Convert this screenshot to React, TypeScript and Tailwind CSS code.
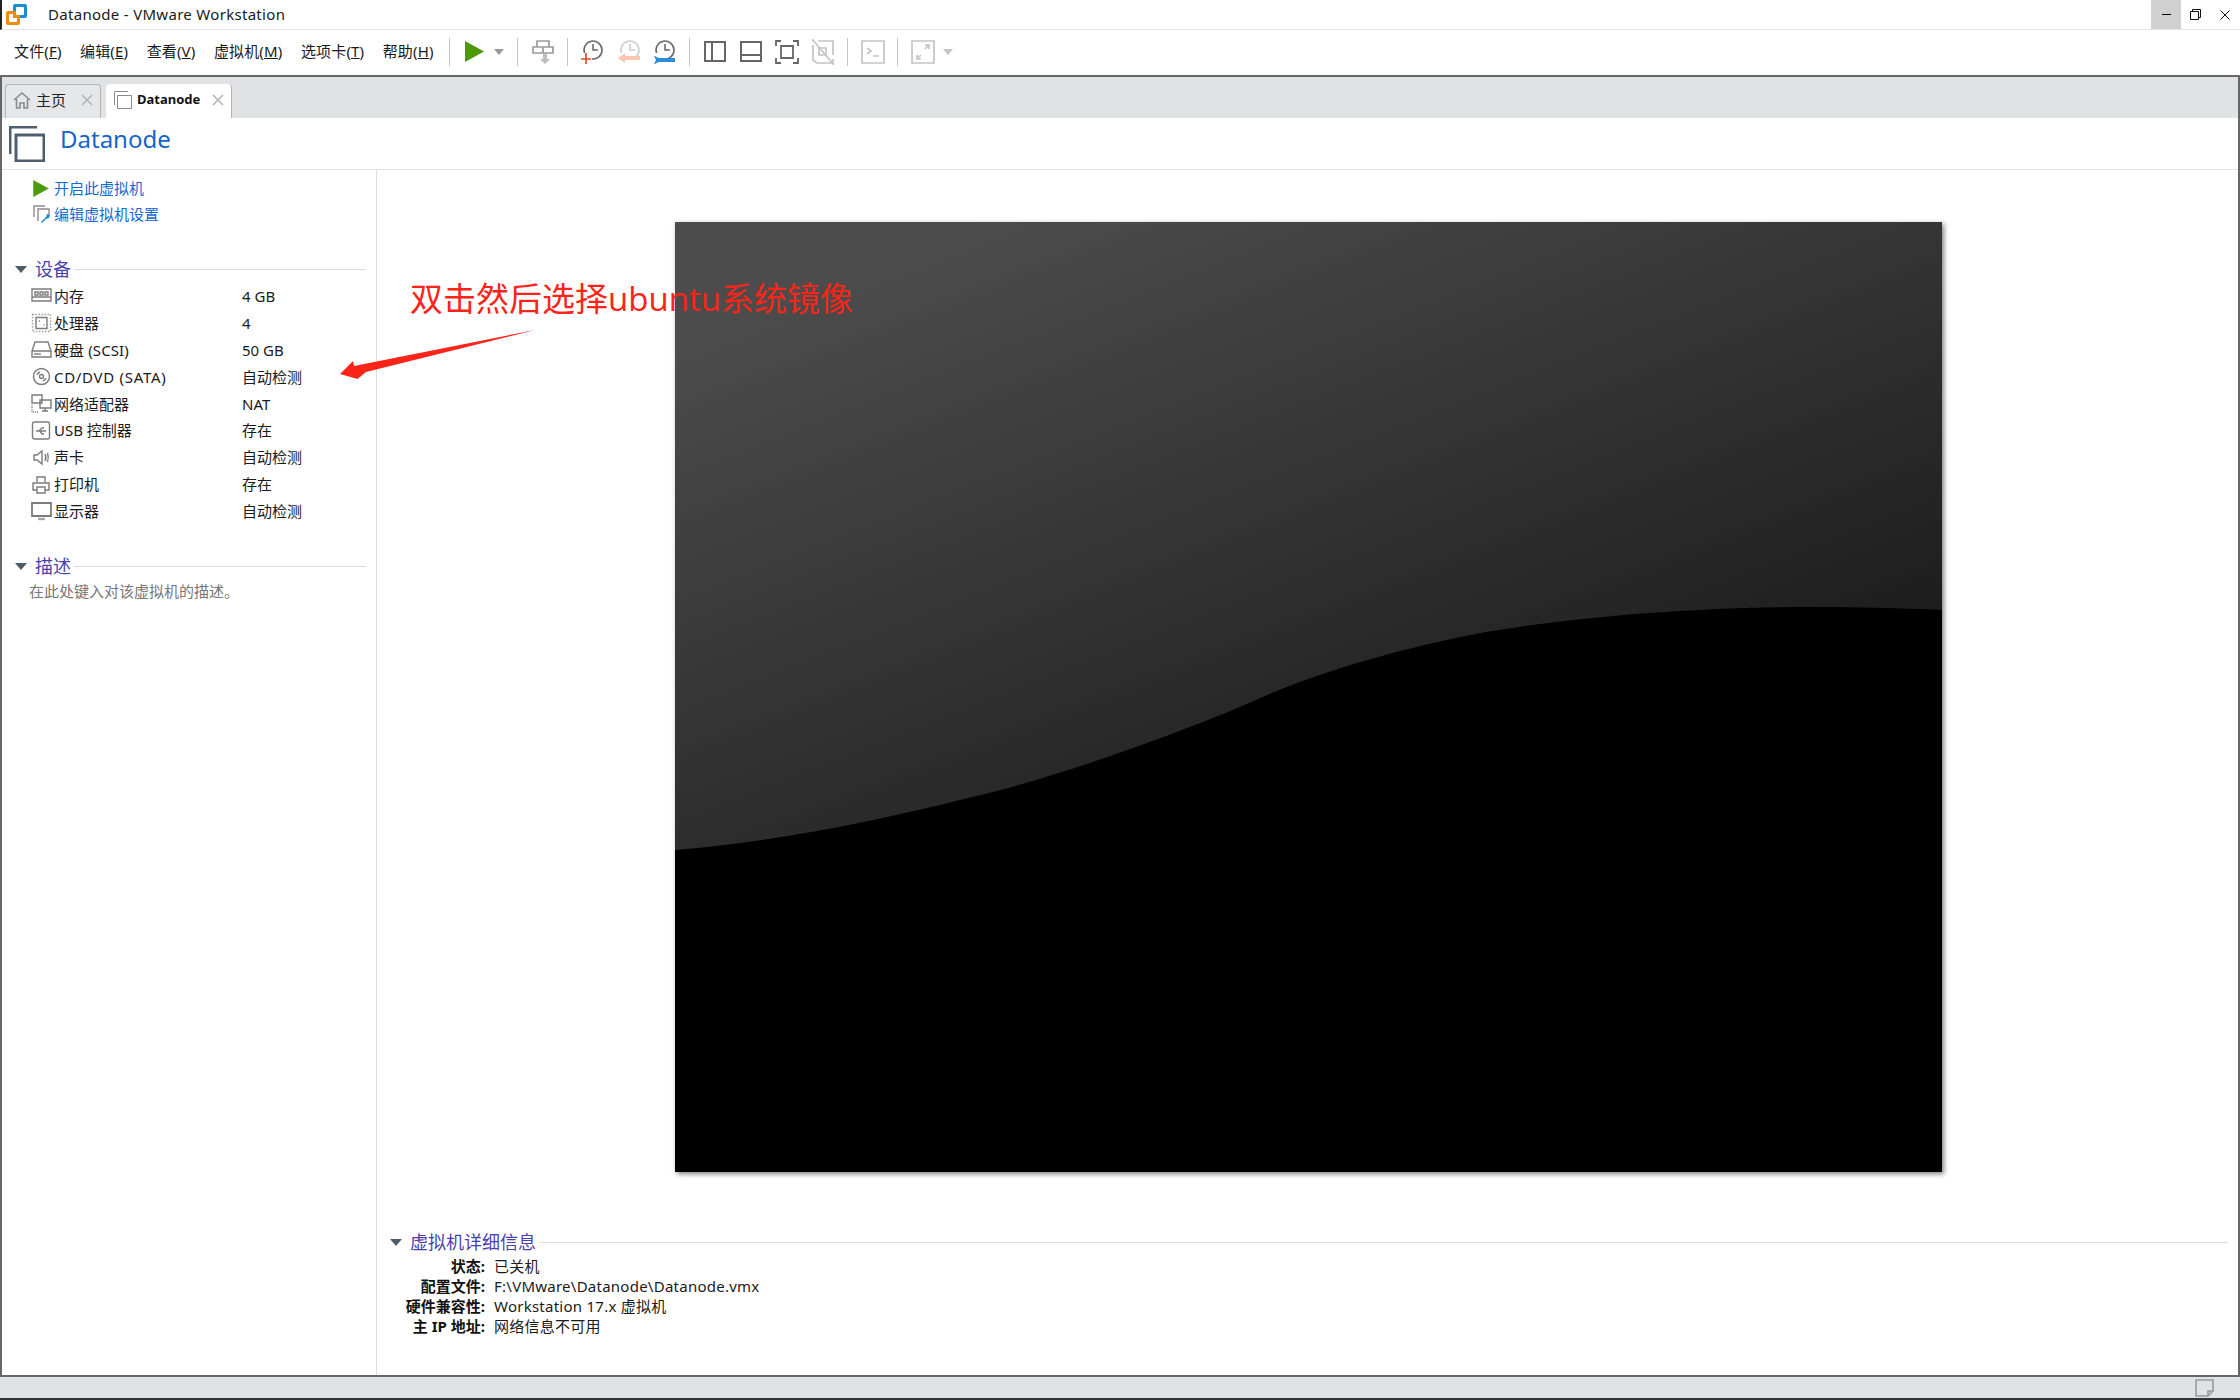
import React from "react";

const FONT = "font-['Noto_Sans','Noto_Sans_CJK_SC',sans-serif]";

const Sep = ({ className = "" }: { className?: string }) => (
  <div className={`w-px h-[28px] bg-[#c8c8c8] shrink-0 ${className}`} />
);

const Caret = ({ className = "", color = "#9a9a9a" }: { className?: string; color?: string }) => (
  <svg width="10" height="6" viewBox="0 0 10 6" className={`shrink-0 ${className}`}>
    <path d="M0 0h10L5 6z" fill={color} />
  </svg>
);

const SectionCaret = ({ className = "" }: { className?: string }) => (
  <svg width="12" height="7" viewBox="0 0 12 7" className={`shrink-0 ${className}`}>
    <path d="M0 0h12L6 7z" fill="#4f5b66" />
  </svg>
);

const Play = ({ w, h }: { w: number; h: number }) => (
  <svg width={w} height={h} viewBox="0 0 20 22" className="shrink-0">
    <path d="M0 0l20 11L0 22z" fill="#4c9a0a" />
  </svg>
);

const VmIcon = ({ size, stroke, color }: { size: number; stroke: number; color: string }) => (
  <svg width={size} height={size} viewBox="0 0 36 36" fill="none" stroke={color} strokeWidth={stroke} className="shrink-0">
    <path d="M28 1H1v27" />
    <path d="M7 9h28v26H7z" />
  </svg>
);

const X = ({ color = "#b5b5b5" }: { color?: string }) => (
  <svg width="12" height="12" viewBox="0 0 12 12" stroke={color} strokeWidth="1.6" className="shrink-0">
    <path d="M1 1l10 10M11 1L1 11" />
  </svg>
);

const Clock = ({ color }: { color: string }) => (
  <g fill="none" stroke={color} strokeWidth="1.6">
    <path d="M3.5 14A9 9 0 1 1 11 20" />
    <path d="M12 5v6h5" />
  </g>
);

const Tool = ({ w, className = "", children }: { w: number; className?: string; children: React.ReactNode }) => (
  <svg width={w} height="26" viewBox={`0 0 ${w} 26`} className={`shrink-0 ${className}`}>
    {children}
  </svg>
);

const Toolbar = () => (
  <div className="h-[45px] pb-[2px] flex items-center shrink-0 bg-white">
    <div className="w-[449px] pl-[14px] pb-[1px] flex gap-[18.5px] text-[15px] tracking-[0.15px] text-[#1a1a1a] shrink-0 whitespace-nowrap">
      <span>文件(<u>F</u>)</span>
      <span>编辑(<u>E</u>)</span>
      <span>查看(<u>V</u>)</span>
      <span>虚拟机(<u>M</u>)</span>
      <span>选项卡(<u>T</u>)</span>
      <span>帮助(<u>H</u>)</span>
    </div>
    <Sep />
    <div className="ml-[15px]"><Play w={19} h={21} /></div>
    <Caret className="ml-[10px]" />
    <Sep className="ml-[13px]" />
    <Tool w={22} className="ml-[14px]">
      <g fill="none" stroke="#9a9a9a" strokeWidth="1.7">
        <path d="M5 2h12v6H5zM1 8h10v6H1zM11 8h10v6H11z" />
      </g>
      <path d="M14 15v5h-3l5 5 5-5h-3v-5z" fill="#bdbdbd" transform="translate(-3 0)" />
    </Tool>
    <Sep className="ml-[13px]" />
    <Tool w={22} className="ml-[13px]">
      <Clock color="#6a6a6a" />
      <path d="M5 14v11M0 20h10" stroke="#e0531f" strokeWidth="1.7" />
    </Tool>
    <Tool w={22} className="ml-[15px] opacity-60">
      <Clock color="#b0b0b0" />
      <path d="M22 19H6" stroke="#ffa27c" strokeWidth="4" />
      <path d="M0 19l7-5v10z" fill="#ffa27c" />
    </Tool>
    <Tool w={22} className="ml-[13px]">
      <Clock color="#6a6a6a" />
      <path d="M1 17c2 0 3 2 6 2h15v4H7c-3 0-4 2-6 2l2-4z" fill="#2b8fd8" />
    </Tool>
    <Sep className="ml-[14px]" />
    <Tool w={22} className="ml-[14px]">
      <g fill="none" stroke="#666" strokeWidth="2">
        <path d="M1 3h20v19H1zM8 3v19" />
      </g>
    </Tool>
    <Tool w={22} className="ml-[14px]">
      <g fill="none" stroke="#666" strokeWidth="2">
        <path d="M1 3h20v19H1zM1 16h20" />
      </g>
    </Tool>
    <Tool w={24} className="ml-[13px]">
      <g fill="none" stroke="#666" strokeWidth="1.8">
        <path d="M1 7V2h5M18 2h5v5M23 19v5h-5M6 24H1v-5" />
        <path d="M6 7h12v12H6z" />
      </g>
    </Tool>
    <Tool w={22} className="ml-[13px]">
      <g fill="none" stroke="#c4c4c4" strokeWidth="1.7">
        <path d="M6 2h15v14M21 20v4H5L1 21V6M7 9h7v7H7z" />
        <path d="M0 0l22 26" />
      </g>
    </Tool>
    <Sep className="ml-[13px]" />
    <Tool w={24} className="ml-[13px]">
      <g fill="none" stroke="#c4c4c4" strokeWidth="1.7">
        <path d="M1 2h22v22H1z" />
        <path d="M6 9l4 3-4 3M12 17h6" />
      </g>
    </Tool>
    <Sep className="ml-[12px]" />
    <Tool w={24} className="ml-[13px]">
      <g fill="none" stroke="#c4c4c4" strokeWidth="1.7">
        <path d="M1 2h22v22H1z" />
        <path d="M14 6h4v4M18 6l-4 4M10 20H6v-4M6 20l4-4" />
      </g>
    </Tool>
    <Caret className="ml-[8px]" color="#c4c4c4" />
  </div>
);

const TitleBar = () => (
  <div className="h-[30px] flex items-center shrink-0 border-b border-[#e3e3e3] border-l-2 border-l-[#222] bg-white">
    <svg width="21" height="21" viewBox="0 0 21 21" className="ml-[4px] shrink-0">
      <rect x="7" y="0" width="14" height="14" rx="2" fill="#1b8fce" />
      <rect x="0" y="7" width="14" height="14" rx="2" fill="#ee8a12" />
      <rect x="10" y="3" width="8" height="8" rx="1" fill="white" />
      <rect x="3" y="10" width="8" height="8" rx="1" fill="white" />
      <rect x="7" y="7" width="7" height="7" fill="#ee8a12" />
      <rect x="10" y="7" width="4" height="4" fill="white" />
    </svg>
    <span className="ml-[21px] text-[15px] tracking-[0.3px] text-[#1a1a1a] leading-none">Datanode - VMware Workstation</span>
    <div className="ml-auto flex h-full">
      <div className="w-[30px] h-full bg-[#d0d0d0] flex items-center justify-center">
        <div className="w-[9px] h-px bg-black" />
      </div>
      <div className="w-[29px] flex items-center justify-center">
        <svg width="11" height="11" viewBox="0 0 11 11" fill="none" stroke="#111">
          <path d="M.5 2.5h8v8h-8zM2.5 2.5v-2h8v8h-2" />
        </svg>
      </div>
      <div className="w-[30px] flex items-center justify-center">
        <svg width="10" height="10" viewBox="0 0 10 10" stroke="#111" strokeWidth="1">
          <path d="M.5.5l9 9M9.5.5l-9 9" />
        </svg>
      </div>
    </div>
  </div>
);

const Tabs = () => (
  <div className="h-[41px] bg-[#e1e2e4] flex items-end pl-[3px] shrink-0 gap-[5px]">
    <div className="w-[96px] h-[34px] pb-[3px] bg-[#e6e7e9] border border-b-0 border-[#b4b4b4] rounded-t-[4px] flex items-center pl-[7px] text-[15px] text-[#222]">
      <svg width="18" height="18" viewBox="0 0 18 18" fill="none" stroke="#8a8a8a" strokeWidth="1.6" className="shrink-0">
        <path d="M1 9l8-7 8 7M3.5 8v9H7v-5h4v5h3.5V8" />
      </svg>
      <span className="ml-[5px]">主页</span>
      <span className="ml-[15px]"><X /></span>
    </div>
    <div className="w-[126px] h-[34px] pb-[3px] bg-white border-r border-[#b4b4b4] rounded-t-[4px] flex items-center pl-[8px]">
      <VmIcon size={18} stroke={2} color="#8a8a8a" />
      <span className="ml-[5px] text-[13px] font-bold text-[#111] w-[66px]">Datanode</span>
      <span className="ml-[9px]"><X /></span>
    </div>
  </div>
);

const gray = { fill: "none", stroke: "#7c7c7c", strokeWidth: 1.4 };

const icons: Record<string, React.ReactNode> = {
  mem: (
    <g {...gray}>
      <path d="M1 3h19v12H1zM1 11h19" />
      <path d="M4 6h3v3H4zM9 6h3v3H9zM14 6h3v3h-3z" />
    </g>
  ),
  cpu: (
    <g {...gray}>
      <path d="M5 4.5h11v11H5z" />
      <path d="M1.5 1.5h18v17h-18z" strokeDasharray="1.5 1.5" stroke="#a0a0a0" />
      <path d="M8 8h1M12.5 12h1" strokeWidth="1.6" />
    </g>
  ),
  disk: (
    <g {...gray}>
      <path d="M4 2h13l3 9v6H1v-6zM1 11h19" />
      <path d="M3 14h7" />
    </g>
  ),
  cd: (
    <g {...gray}>
      <circle cx="10.5" cy="9.5" r="8" />
      <circle cx="10.5" cy="9.5" r="2" />
      <path d="M6 8a5 5 0 0 1 3-3M12 14a5 5 0 0 0 3-3" />
    </g>
  ),
  net: (
    <g {...gray}>
      <path d="M1 1h10v8H1zM9 6h11v8H9zM14 14v3M11 17h6" />
      <path d="M1 11v7h7" strokeDasharray="1 1" />
    </g>
  ),
  usb: (
    <g {...gray}>
      <rect x="1.5" y="1" width="17" height="17" rx="2" />
      <path d="M5 10h10M8 10l3-3h2M9 10l2 3h2" />
    </g>
  ),
  sound: (
    <g {...gray}>
      <path d="M3 7h3l5-4v13l-5-4H3z" />
      <path d="M14 6c1 2 1 5 0 7M16.5 5c1 3 1 6 0 9" />
    </g>
  ),
  print: (
    <g {...gray}>
      <path d="M6 7V2h8v5M6 15H2V8h16v7h-4M6 12h8v6H6z" />
    </g>
  ),
  screen: (
    <g {...gray}>
      <path d="M1 1h19v13H1z" strokeWidth="1.8" />
      <path d="M7 17h7" strokeWidth="2.4" stroke="#a8a8a8" />
    </g>
  ),
};

const devices = [
  ["mem", "内存", "4 GB", ""],
  ["cpu", "处理器", "4", ""],
  ["disk", "硬盘 (SCSI)", "50 GB", "tracking-[0.1px]"],
  ["cd", "CD/DVD (SATA)", "自动检测", "tracking-[0.7px]"],
  ["net", "网络适配器", "NAT", ""],
  ["usb", "USB 控制器", "存在", ""],
  ["sound", "声卡", "自动检测", ""],
  ["print", "打印机", "存在", ""],
  ["screen", "显示器", "自动检测", ""],
];

const SectionHead = ({ title }: { title: string }) => (
  <div className="flex items-center h-[24px]">
    <SectionCaret />
    <span className="ml-[8px] text-[18px] leading-none text-[#4b3fae] whitespace-nowrap">{title}</span>
    <div className="ml-[3px] flex-1 h-px bg-[#dcdcdc]" />
  </div>
);

const Sidebar = () => (
  <div className="w-[375px] shrink-0 border-r border-[#dedede] pt-[5px] text-[15px] text-[#1a1a1a]">
    <div className="pl-[31px] text-[#1669d3]">
      <div className="h-[26px] flex items-center">
        <Play w={16} h={17} />
        <span className="ml-[5px] leading-none">开启此虚拟机</span>
      </div>
      <div className="h-[26px] flex items-center">
        <svg width="18" height="18" viewBox="0 0 18 18" fill="none" className="shrink-0">
          <path d="M12 1H1v11" stroke="#8a8a8a" strokeWidth="1.4" />
          <path d="M5 16V4h11v6" stroke="#8a8a8a" strokeWidth="1.4" />
          <path d="M8 17l5-5 1-3 3 1-1 3-3 1-4 4z" fill="#1a8bd8" />
        </svg>
        <span className="ml-[3px] leading-none">编辑虚拟机设置</span>
      </div>
    </div>
    <div className="mt-[30px] pl-[13px] pr-[10px]">
      <SectionHead title="设备" />
    </div>
    <div className="pl-[29px] mt-[2px]">
      {devices.map(([icon, name, value, tracking]) => (
        <div key={icon} className="h-[26.9px] flex items-center">
          <svg width="21" height="20" viewBox="0 0 21 20" className="shrink-0">
            {icons[icon]}
          </svg>
          <span className={`ml-[2px] w-[188px] leading-none whitespace-nowrap ${tracking}`}>{name}</span>
          <span className="leading-none">{value}</span>
        </div>
      ))}
    </div>
    <div className="mt-[29px] pl-[13px] pr-[10px]">
      <SectionHead title="描述" />
    </div>
    <div className="pl-[27px] mt-[3px] text-[#777] leading-[20px]">在此处键入对该虚拟机的描述。</div>
  </div>
);

const Preview = () => (
  <div className="mt-[52px] ml-[298px] w-[1267px] h-[950px] shrink-0 shadow-[2px_2px_5px_rgba(0,0,0,0.5)]">
    <svg width="1267" height="950" viewBox="0 0 1267 950" className="block">
      <defs>
        <linearGradient id="pv" gradientUnits="userSpaceOnUse" x1="300" y1="0" x2="570" y2="683">
          <stop offset="0" stopColor="#4c4c4c" />
          <stop offset="1" stopColor="#1c1c1c" />
        </linearGradient>
      </defs>
      <rect width="1267" height="950" fill="url(#pv)" />
      <path
        d="M0 628C120 618 230 592 322 569C410 546 530 501 583 477C650 447 740 423 811 410C900 395 1020 385 1138 385C1180 385 1225 386 1267 388V950H0z"
        fill="#000"
      />
    </svg>
  </div>
);

const details = [
  ["状态:", "已关机"],
  ["配置文件:", "F:\\VMware\\Datanode\\Datanode.vmx"],
  ["硬件兼容性:", "Workstation 17.x 虚拟机"],
  ["主 IP 地址:", "网络信息不可用"],
];

const Details = () => (
  <div className="mt-auto pl-[13px] pr-[10px] pb-[39px]">
    <SectionHead title="虚拟机详细信息" />
    <div className="mt-[2px] text-[15px]">
      {details.map(([label, value]) => (
        <div key={label} className="h-[20px] flex items-center leading-none whitespace-nowrap">
          <span className="w-[95px] text-right font-bold text-[#111]">{label}</span>
          <span className="ml-[9px] text-[#1a1a1a] tracking-[0.25px]">{value}</span>
        </div>
      ))}
    </div>
  </div>
);

export default function App() {
  return (
    <div className={`relative w-[2240px] h-[1400px] overflow-hidden bg-white flex flex-col ${FONT}`}>
      <TitleBar />
      <Toolbar />
      <div className="flex-1 min-h-0 flex flex-col border-t-2 border-x-2 border-[#666]">
        <Tabs />
        <div className="h-[52px] shrink-0 flex items-center pl-[7px] border-b border-[#e3e3e3]">
          <VmIcon size={36} stroke={3} color="#4f5f6e" />
          <span className="ml-[15px] mb-[9px] text-[24px] leading-none text-[#1565c8]">Datanode</span>
        </div>
        <div className="flex-1 min-h-0 flex">
          <Sidebar />
          <div className="flex-1 flex flex-col min-w-0">
            <Preview />
            <Details />
          </div>
        </div>
      </div>
      <div className="h-[25px] shrink-0 bg-[#e1e2e4] border-t-2 border-[#666] border-b-2 border-b-[#333] flex items-center justify-end pr-[26px]">
        <svg width="19" height="18" viewBox="0 0 19 18" fill="none" stroke="#999" strokeWidth="1.6">
          <path d="M1 1h17v11l-5 5H1zM18 12h-5v5" />
        </svg>
      </div>

      {/* annotation drawn over the window */}
      <span className="absolute left-[410px] top-[275px] text-[33px] leading-[48px] text-[#fb2419] whitespace-nowrap font-['Open_Sans','Noto_Sans_CJK_SC',sans-serif]">
        双击然后选择ubuntu系统镜像
      </span>
      <svg width="210" height="60" viewBox="335 325 210 60" className="absolute left-[335px] top-[325px]">
        <path d="M535 330L354 366L353 361L340 374L357.5 379L366 372z" fill="#fb2419" />
      </svg>
    </div>
  );
}
